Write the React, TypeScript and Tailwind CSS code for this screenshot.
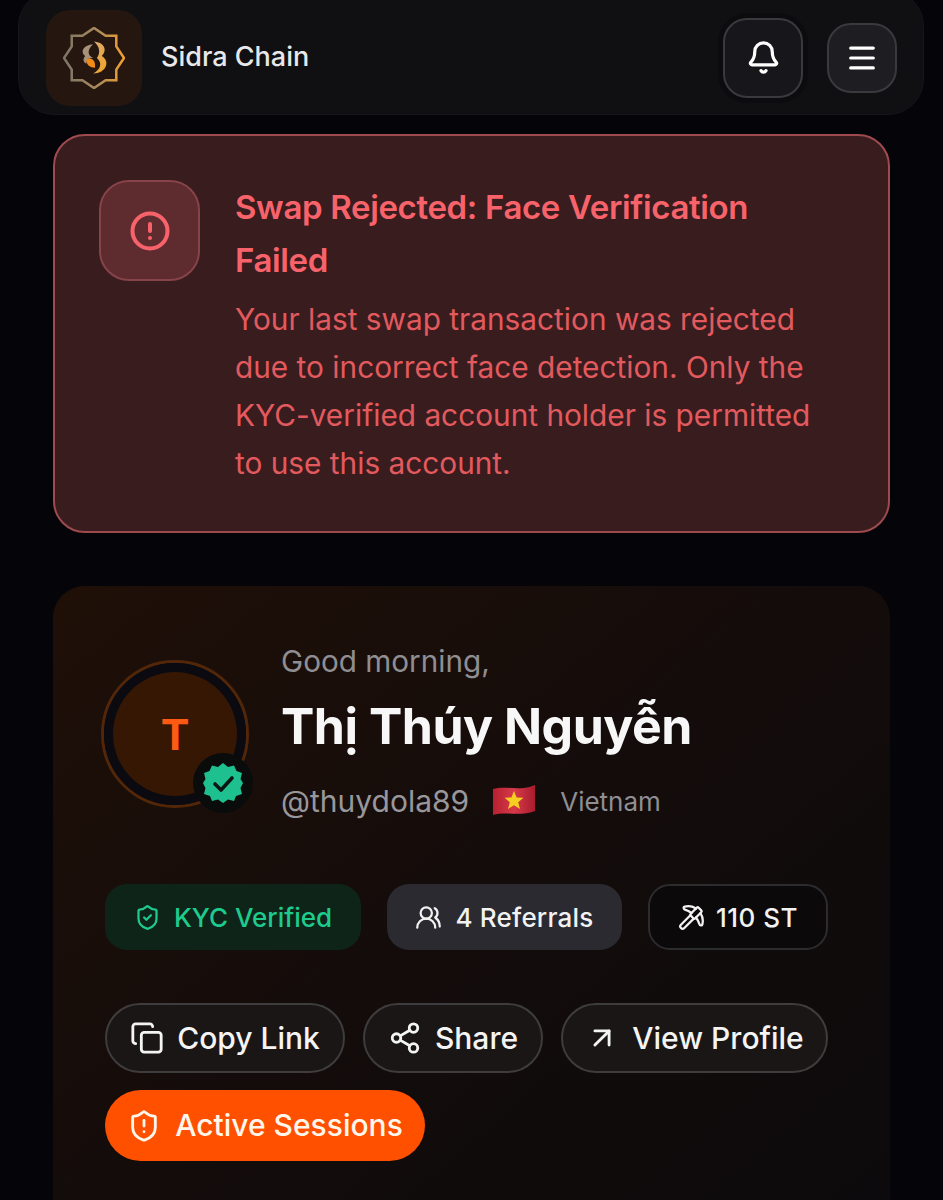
import React from 'react';
import { ArrowUpRight, Bell, CircleAlert, Copy, Menu, Pickaxe, Share2, ShieldAlert, ShieldCheck, UsersRound } from 'lucide-react';

const font = { fontFamily: 'Inter, "Noto Sans", sans-serif' };

const SidraLogo = () => (
  <svg viewBox="0 0 64 64" className="h-[62px] w-[62px]" fill="none">
    <defs>
      <linearGradient id="sidraStar" x1="0" y1="0" x2="1" y2="0">
        <stop offset="0" stopColor="#7d7468" />
        <stop offset="0.55" stopColor="#a98a5c" />
        <stop offset="1" stopColor="#f2a030" />
      </linearGradient>
      <linearGradient id="sidraMark" x1="0" y1="0" x2="1" y2="1">
        <stop offset="0" stopColor="#d8b078" />
        <stop offset="1" stopColor="#f5a020" />
      </linearGradient>
    </defs>
    <path
      d="M32 1 L44 9 L55 9 L55 20 L63 32 L55 44 L55 55 L44 55 L32 63 L20 55 L9 55 L9 44 L1 32 L9 20 L9 9 L20 9 Z"
      stroke="url(#sidraStar)"
      strokeWidth="2.6"
    />
    <path d="M32 15 C43 16 46 24 40 30 C49 35 45 48 31 48 C39 44 41 37 35 32 C39 27 38 20 32 15 Z" fill="url(#sidraMark)" />
    <path d="M31 18 C22 18 17 25 23 30 C20 33 21 36 24 38 C24 34 26 32 31 32 C25 29 25 23 31 18 Z" fill="#a8927a" />
    <path d="M24 34 C29 30 34 34 33 42 C28 42 24 39 24 34 Z" fill="#f08a18" />
  </svg>
);

const VerifiedBadge = () => (
  <svg viewBox="0 0 40 40" className="h-10 w-10">
    <path
      d="M20 0 L25 4 L31 2.5 L33.5 8 L39 10 L37.5 16 L40 20 L37.5 25 L39 31 L33 33 L31 38 L25 36.5 L20 40 L15 36.5 L9 38 L7 33 L1 31 L2.5 25 L0 20 L2.5 16 L1 10 L6.5 8 L9 2.5 L15 4 Z"
      fill="#1fc08f"
    />
    <path d="M12 21 L18 27 L29 15" fill="none" stroke="#0b1512" strokeWidth="3.6" strokeLinecap="round" strokeLinejoin="round" />
  </svg>
);

const VietnamFlag = () => (
  <svg viewBox="0 0 44 34" className="h-[34px] w-[44px]">
    <defs>
      <linearGradient id="flagRed" x1="0" y1="0" x2="1" y2="0">
        <stop offset="0" stopColor="#b8202f" />
        <stop offset="0.5" stopColor="#d63a4a" />
        <stop offset="1" stopColor="#a81c2c" />
      </linearGradient>
    </defs>
    <path d="M1 5 C14 1 26 8 43 1 L43 27 C28 33 14 27 1 31 Z" fill="url(#flagRed)" />
    <path d="M22 7 L24.6 13.4 L31.4 13.8 L26.2 18.2 L28 25 L22 21.2 L16 25 L17.8 18.2 L12.6 13.8 L19.4 13.4 Z" fill="#f5d020" />
  </svg>
);

export default function App() {
  return (
    <div className="h-[1200px] overflow-hidden bg-[#050509] px-[18px]" style={font}>
      {/* top bar, its upper edge runs off the screen */}
      <header className="mt-[-10px] flex h-[125px] w-[906px] items-center justify-between rounded-[36px] border border-[#15151a] bg-[#101013] pt-[10px] pl-[27px] pr-[26px]">
        <div className="flex items-center gap-[19px]">
          <div className="flex h-[96px] w-[96px] items-center justify-center rounded-[24px] bg-[#251710]">
            <SidraLogo />
          </div>
          <span className="text-[27px] font-medium text-[#e8e8ea]">Sidra Chain</span>
        </div>
        <div className="flex items-center gap-[24px]">
          <button className="flex h-[80px] w-[80px] items-center justify-center rounded-[24px] border-2 border-[#3a3a3e] bg-[#17171b] text-white shadow-[0_0_0_5px_#0c0c0f]">
            <Bell size={35} strokeWidth={2.2} />
          </button>
          <button className="flex h-[70px] w-[70px] items-center justify-center rounded-[24px] border-2 border-[#3a3a3e] bg-[#1e1e22] text-white">
            <Menu size={34} strokeWidth={2.2} />
          </button>
        </div>
      </header>

      <main className="mx-[35px] mt-[19px] flex flex-col gap-[53px]">
        <section className="flex h-[399px] gap-[35px] rounded-[32px] border-2 border-[#9f4a4e] bg-[#391c1e] pl-[44px] pt-[44px]">
          <div className="flex h-[101px] w-[101px] shrink-0 items-center justify-center rounded-[30px] border-2 border-[#86434a] bg-[#5e2b2f] text-[#f8636b]">
            <CircleAlert size={42} strokeWidth={2.3} />
          </div>
          <div className="w-[590px] pt-[1px] text-[#f8636b]">
            <h2 className="text-[33px] leading-[52.5px] font-semibold tracking-[-0.35px]">Swap Rejected: Face Verification Failed</h2>
            <p className="mt-[9px] text-[29.8px] leading-[48px] text-[#e25a5e]">
              Your last swap transaction was rejected due to incorrect face detection. Only the KYC-verified account holder is permitted to use this account.
            </p>
          </div>
        </section>

        <section className="h-[700px] rounded-[32px] bg-gradient-to-br from-[#1f0f07] via-[#130c0b] to-[#0b0a0c] pl-[48px] pt-[74px]">
          <div className="flex gap-[32px]">
            <div className="relative h-[148px] w-[148px] shrink-0 rounded-full border-[3px] border-[#522608] p-[9px]">
              <div className="flex h-full w-full items-center justify-center rounded-full bg-[#361704] text-[43px] font-bold text-[#ff5a14] shadow-[0_0_0_9px_#0a0a10]">
                T
              </div>
              <div className="absolute bottom-[-8px] right-[-7px] flex h-[60px] w-[60px] items-center justify-center rounded-full bg-[#0a0c0c]">
                <VerifiedBadge />
              </div>
            </div>
            <div className="mt-[-23px]">
              <p className="text-[29.7px] leading-[48px] text-[#8f8e92]">Good morning,</p>
              <h1 className="mt-[8px] text-[50px] leading-[66px] font-bold tracking-[-0.5px] text-[#f7f7f7]">Thị Thúy Nguyễn</h1>
              <div className="mt-[22px] flex items-center">
                <span className="text-[30px] leading-[40px] text-[#98979c]">@thuydola89</span>
                <span className="ml-[23px]"><VietnamFlag /></span>
                <span className="ml-[24px] text-[26px] text-[#8f8e94]">Vietnam</span>
              </div>
            </div>
          </div>

          <div className="ml-[4px] mt-[63px] flex gap-[26px]">
            <div className="flex h-[66px] w-[256px] items-center justify-center gap-[13px] rounded-[22px] bg-[#0f2418] text-[26px] font-medium text-[#1ecb8e]">
              <ShieldCheck size={27} strokeWidth={2} />
              KYC Verified
            </div>
            <div className="flex h-[66px] w-[235px] items-center justify-center gap-[13px] rounded-[22px] bg-[#2a2a30] text-[26px] font-medium tracking-[0.2px] text-[#f2f2f2]">
              <UsersRound size={27} strokeWidth={2} />
              4 Referrals
            </div>
            <div className="flex h-[66px] w-[180px] items-center justify-center gap-[11px] rounded-[22px] border-2 border-[#2c2c2e] bg-[#0b090a] text-[26px] font-medium tracking-[0.5px] text-[#f2f2f2]">
              <Pickaxe size={27} strokeWidth={2} />
              110 ST
            </div>
          </div>

          <div className="ml-[4px] mt-[53px] flex w-[740px] flex-wrap gap-x-[18px] gap-y-[17px] text-[30px] font-medium text-[#f4f4f4]">
            <button className="flex h-[70px] w-[240px] items-center justify-center gap-[13px] rounded-full border-2 border-[#3e3c3c] bg-[#1a1616]">
              <Copy size={34} strokeWidth={2} />
              Copy Link
            </button>
            <button className="flex h-[70px] w-[180px] items-center justify-center gap-[13px] rounded-full border-2 border-[#3e3c3c] bg-[#1a1616]">
              <Share2 size={34} strokeWidth={2} />
              Share
            </button>
            <button className="flex h-[70px] w-[267px] items-center justify-center gap-[13px] rounded-full border-2 border-[#3e3c3c] bg-[#1a1616]">
              <ArrowUpRight size={34} strokeWidth={2} />
              View Profile
            </button>
            <button className="flex h-[71px] w-[320px] items-center justify-center gap-[14px] rounded-full bg-[#ff5000] text-[#fff6ec]">
              <ShieldAlert size={34} strokeWidth={2} />
              Active Sessions
            </button>
          </div>
        </section>
      </main>
    </div>
  );
}
